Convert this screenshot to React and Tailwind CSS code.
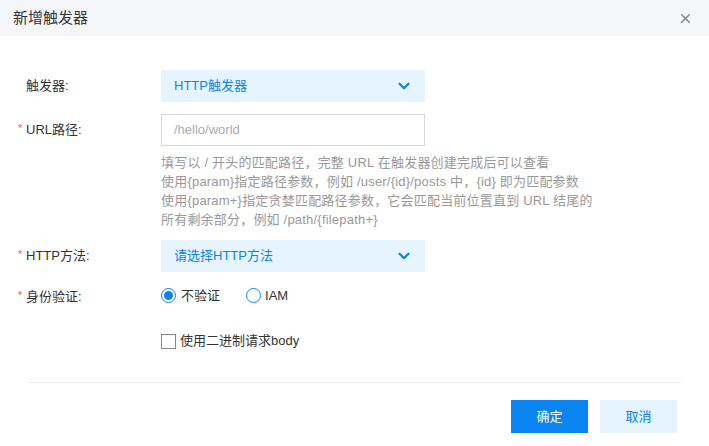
import { ChevronDown, X } from "lucide-react";

const font = { fontFamily: '"Liberation Sans", "Noto Sans CJK SC", sans-serif' };

function Label({ required, children }) {
  return (
    <div className="relative flex h-8 w-[161px] shrink-0 items-center pl-[26px] text-[13px] text-[#333]">
      {required ? <span className="absolute left-[18px] top-[9px] text-[11px] leading-none text-[#f55]">*</span> : null}
      {children}
    </div>
  );
}

function Select({ value }) {
  return (
    <div className="flex h-8 w-[264px] items-center justify-between bg-[#e6f4ff] pl-[13px] pr-[12px] text-[13px] text-[#0a84f0]">
      <span>{value}</span>
      <ChevronDown className="h-[18px] w-[18px]" strokeWidth={3} />
    </div>
  );
}

export default function App() {
  return (
    <div className="h-[446px] w-[709px] bg-white" style={font}>
      <div className="flex h-9 items-center justify-between pl-[13px] pr-[16px] bg-[#f5f6fa]">
        <span className="text-[15px] text-[#333]">新增触发器</span>
        <X className="h-[15px] w-[15px] text-[#888]" strokeWidth={2.5} />
      </div>

      <div className="pt-[34px]">
        <div className="flex items-center">
          <Label>触发器:</Label>
          <Select value="HTTP触发器" />
        </div>

        <div className="mt-3 flex">
          <Label required>URL路径:</Label>
          <div>
            <div className="flex h-8 w-[264px] items-center border border-[#d6d6d6] px-[12px] text-[13px] text-[#aaa]">/hello/world</div>
            <div className="mt-[7px] text-[13px] leading-[19px] tracking-[0.2px] text-[#999]">
              <div>填写以 / 开头的匹配路径，完整 URL 在触发器创建完成后可以查看</div>
              <div>使用{"{param}"}指定路径参数，例如 /user/{"{id}"}/posts 中，{"{id}"} 即为匹配参数</div>
              <div>使用{"{param+}"}指定贪婪匹配路径参数，它会匹配当前位置直到 URL 结尾的</div>
              <div>所有剩余部分，例如 /path/{"{filepath+}"}</div>
            </div>
          </div>
        </div>

        <div className="mt-[11px] flex items-center">
          <Label required>HTTP方法:</Label>
          <Select value="请选择HTTP方法" />
        </div>

        <div className="mt-[9px] flex items-center">
          <Label required>身份验证:</Label>
          <div className="-mt-[3px] flex items-center text-[13px] text-[#333]">
            <span className="flex h-[15px] w-[15px] items-center justify-center rounded-full border-[1.5px] border-[#0a84f0]">
              <span className="h-[9px] w-[9px] rounded-full bg-[#0a84f0]" />
            </span>
            <span className="ml-[5px]">不验证</span>
            <span className="ml-[26px] h-[15px] w-[15px] rounded-full border-[1.5px] border-[#0a84f0]" />
            <span className="ml-[4px]">IAM</span>
          </div>
        </div>

        <div className="mt-[19px] flex items-center pl-[161px] text-[13px] leading-[18px] text-[#333]">
          <span className="h-[15px] w-[15px] border border-[#888]" />
          <span className="ml-[4px]">使用二进制请求body</span>
        </div>
      </div>

      <div className="mx-[28px] mt-[32px] h-px bg-[#ebebf3]" />

      <div className="mt-[17px] flex justify-end gap-3 pr-[32px]">
        <button className="h-[33px] w-[77px] bg-[#0a84f0] text-[13px] text-white">确定</button>
        <button className="h-[33px] w-[77px] bg-[#e6f4ff] text-[13px] text-[#0a84f0]">取消</button>
      </div>
    </div>
  );
}
